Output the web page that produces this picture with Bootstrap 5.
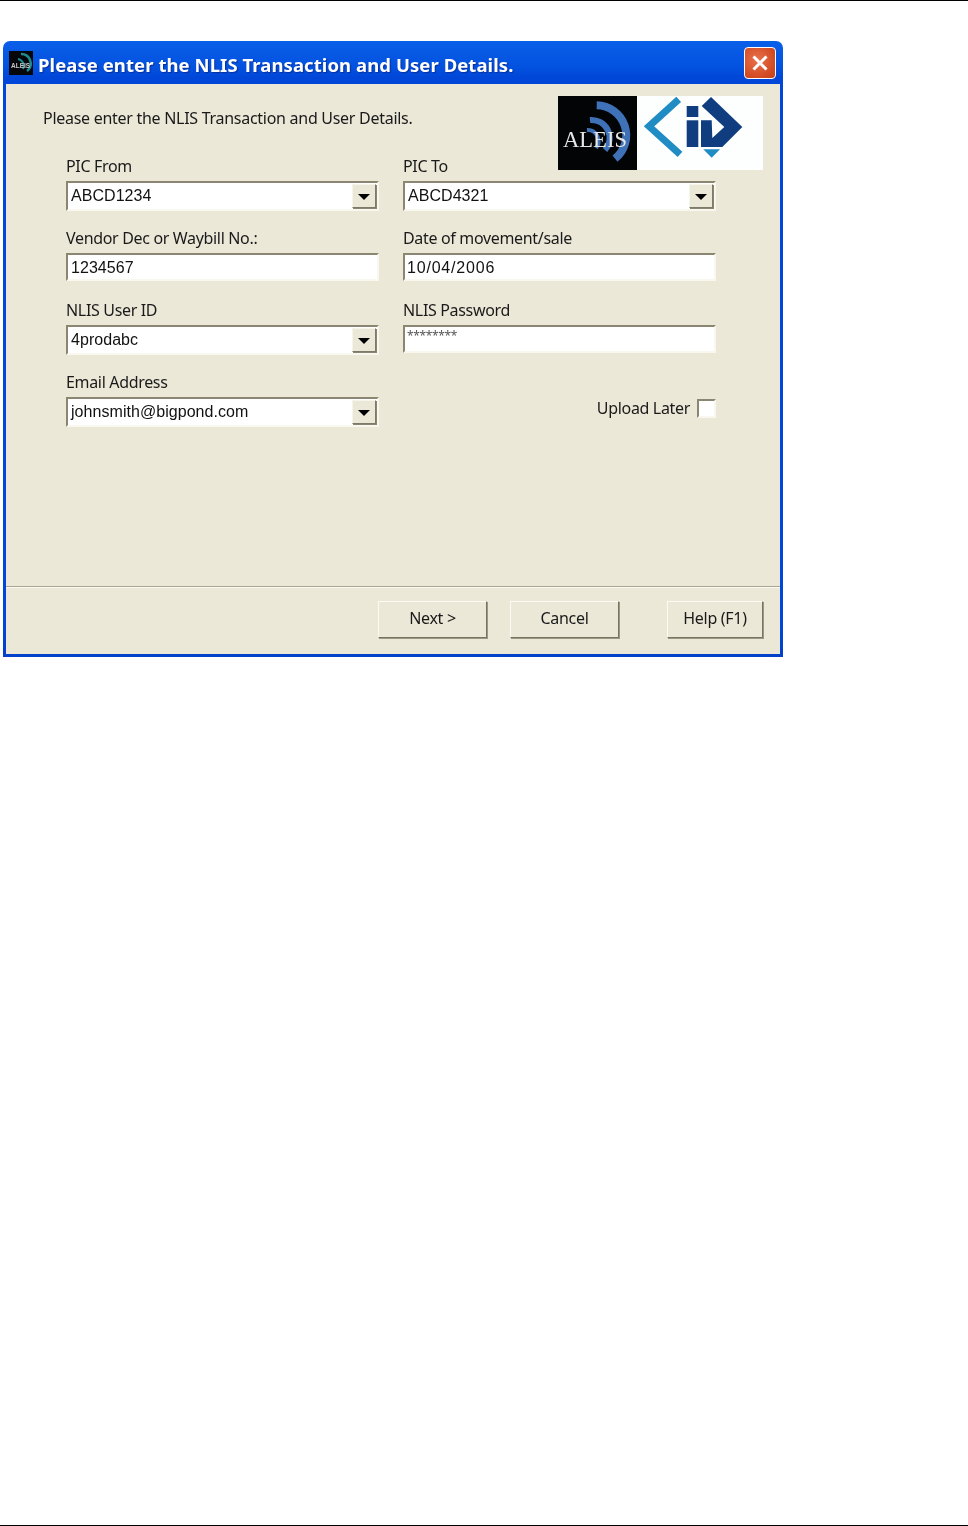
<!DOCTYPE html>
<html lang="en"><head><meta charset="utf-8"><title>NLIS</title>
<link href="https://cdn.jsdelivr.net/npm/bootstrap@5.3.0/dist/css/bootstrap.min.css" rel="stylesheet">
<style>
html,body{height:100%}
body{background:#fff;font-family:"Noto Sans","Liberation Sans",sans-serif;color:#1a1a1a}
.pg{height:1526px;border-top:1px solid #000;border-bottom:1px solid #000;padding:40px 0 0 3px}
.xpw{width:780px;height:616px;background:linear-gradient(#0a5fe8,#0353e0 4%,#0046d8 6%,#0046d8 95%,#0241c8);border-radius:7px 7px 0 0;padding:0 3px 3px;filter:blur(.35px)}
.ttl{height:43px;padding:0 3px 0 3px}
.ttl-ico{width:24px;height:24px;margin-right:5px}
.ttl-txt{color:#fff;font:700 18.5px "Noto Sans",sans-serif;white-space:nowrap;letter-spacing:.07px;padding-top:4px;text-shadow:1px 1px 1px #0a2f99}
.xbtn{width:32px;height:32px;margin-right:1px;border:1px solid #fff;border-radius:4px;background:radial-gradient(circle at 40% 40%,#e8734d,#d24a22 70%,#c23f1a)}
.cli{height:570px;background:#ebe8d8}
.body-area{height:502px;padding:12px 17px 0 37px}
.hd{height:74px;margin-bottom:-12px}
.hd-txt{font-size:16px;padding-top:10px;letter-spacing:-.28px;white-space:nowrap}
.frm{display:grid;grid-template-columns:313px 313px;column-gap:24px;margin-left:23px}
.fld{height:72px}
.fld label{display:block;font-size:16px;line-height:17px;letter-spacing:-.33px;white-space:nowrap;height:23px;margin:0}
.combo,.edit{display:flex;background:#fff;border:2px solid;border-color:#8a8672 #f8f7f0 #f8f7f0 #8a8672;font:16px/24px "Liberation Sans",sans-serif;color:#111;letter-spacing:.05px}
.combo{height:30px;padding:1px 1px 1px 3px;justify-content:space-between}
.edit{height:28px;padding:1px 3px}
.edit.sp-date{letter-spacing:.8px;padding-left:2px}
.arrow{width:24px;height:24px;background:#ebe8d8;border:1px solid;border-color:#f6f5ec #7d7a68 #7d7a68 #f6f5ec;box-shadow:1px 1px 0 #8a8672}
.arrow i{border-left:6px solid transparent;border-right:6px solid transparent;border-top:6px solid #000;margin-top:2px}
.edit.pw{font:12px/16px "Noto Sans",sans-serif;color:#555;letter-spacing:-.35px;padding-left:2px}
.upl{height:46px;padding-top:22px;font-size:16px;letter-spacing:-.33px}
.chk{width:19px;height:19px;margin-left:7px;background:#fff;border:2px solid;border-color:#8a8672 #f8f7f0 #f8f7f0 #8a8672}
.foot{border-top:1px solid #a8a592;box-shadow:inset 0 1px 0 #fbfaf3;height:68px;padding:14px 15px 0 372px}
.wb{width:109px;height:37px;font-size:16px;color:#1a1a1a;background:#ebe8d8;border:1px solid;border-color:#fbfaf3 #77745f #77745f #fbfaf3;box-shadow:1px 1px 0 #9a9785;padding:0 0 3px;letter-spacing:-.3px}
.wb-a{margin-right:23px}.wb-b{width:96px;margin-left:48px}
.wb:hover{background:#ebe8d8}
</style></head>
<body>
<div class="pg">
<div class="xpw d-flex flex-column">
 <div class="ttl d-flex align-items-center">
  <svg class="ttl-ico flex-shrink-0" viewBox="0 0 24 24"><rect width="24" height="24" fill="#05070a"/><g fill="none" stroke="#1f8a90"><path d="M12 3A9.500 9.500 0 0 1 18 20" stroke-width="2.500"/><path d="M9 8A7 7 0 0 1 14 18" stroke-width="2"/></g><text x="2" y="17" font-family="Liberation Sans,sans-serif" font-size="6.500" font-weight="700" fill="#c8c8c8">ALEIS</text></svg>
  <span class="ttl-txt flex-grow-1">Please enter the NLIS Transaction and User Details.</span>
  <div class="xbtn d-flex align-items-center justify-content-center"><svg width="18" height="18" viewBox="0 0 18 18"><path d="M2.500 2.500L15.500 15.500M15.500 2.500L2.500 15.500" stroke="#fff" stroke-width="3"/></svg></div>
 </div>
 <div class="cli d-flex flex-column">
  <div class="body-area">
   <div class="hd d-flex justify-content-between align-items-start">
    <div class="hd-txt">Please enter the NLIS Transaction and User Details.</div>
    <svg width="205" height="74" viewBox="0 0 205 74">
     <rect width="205" height="74" fill="#fdfefe"/><rect width="79" height="74" fill="#030405"/>
     <g fill="none" stroke="#3f71b8"><path d="M38.700 9.300A30 30 0 0 1 57 62.700" stroke-width="8"/><path d="M32 24A18 18 0 0 1 47 54" stroke-width="6"/><path d="M29 34A11 11 0 0 1 38 52" stroke-width="4"/></g>
     <text x="5" y="51" font-family="Liberation Serif,serif" font-size="23" textLength="64" lengthAdjust="spacingAndGlyphs" fill="#e6e6e6">ALEIS</text>
     <path d="M120.700 3.300L91 30.300L122 58.300" fill="none" stroke="#1f8cc3" stroke-width="7"/>
     <rect x="128.700" y="10" width="11.600" height="11" fill="#0f3d80"/><rect x="128.700" y="24.300" width="11.600" height="26.700" fill="#0f3d80"/>
     <path d="M143.700 10L153 1L184.300 31L164.300 51H143V24.300H153.700L154.300 42L166.300 31Z" fill="#0f3d80"/>
     <path d="M145.300 53.300H162L153.700 61.700Z" fill="#1f8cc3"/>
    </svg>
   </div>
   <div class="frm">
    <div class="fld"><label>PIC From</label><div class="combo"><span>ABCD1234</span><span class="arrow d-flex align-items-center justify-content-center"><i></i></span></div></div>
    <div class="fld"><label>PIC To</label><div class="combo"><span>ABCD4321</span><span class="arrow d-flex align-items-center justify-content-center"><i></i></span></div></div>
    <div class="fld"><label>Vendor Dec or Waybill No.:</label><div class="edit">1234567</div></div>
    <div class="fld"><label>Date of movement/sale</label><div class="edit sp-date">10/04/2006</div></div>
    <div class="fld"><label>NLIS User ID</label><div class="combo"><span>4prodabc</span><span class="arrow d-flex align-items-center justify-content-center"><i></i></span></div></div>
    <div class="fld"><label>NLIS Password</label><div class="edit pw">********</div></div>
    <div class="fld"><label>Email Address</label><div class="combo"><span>johnsmith@bigpond.com</span><span class="arrow d-flex align-items-center justify-content-center"><i></i></span></div></div>
    <div class="upl d-flex justify-content-end align-items-center"><span>Upload Later</span><span class="chk"></span></div>
   </div>
  </div>
  <div class="foot d-flex">
   <button class="btn wb wb-a rounded-0" type="button">Next &gt;</button>
   <button class="btn wb rounded-0" type="button">Cancel</button>
   <button class="btn wb wb-b rounded-0" type="button">Help (F1)</button>
  </div>
 </div>
</div>
</div>
<script src="https://cdn.jsdelivr.net/npm/bootstrap@5.3.0/dist/js/bootstrap.bundle.min.js"></script>
</body></html>
